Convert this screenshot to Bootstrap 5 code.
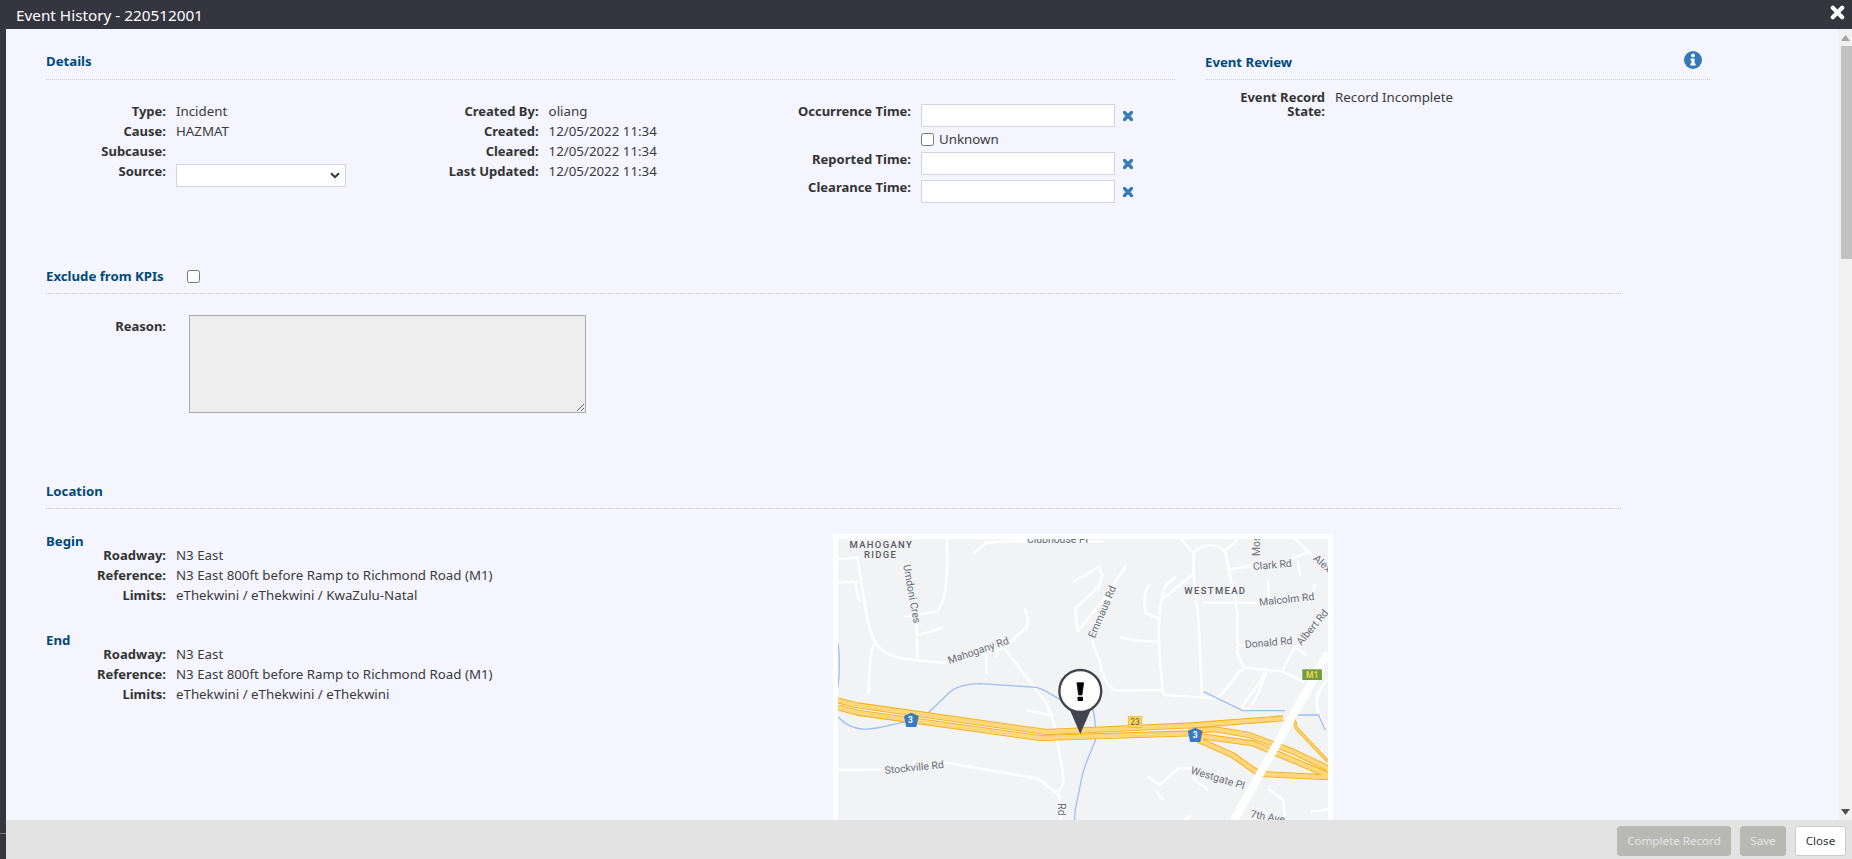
<!DOCTYPE html>
<html lang="en">
<head>
<meta charset="UTF-8">
<title>Event History - 220512001</title>
<link href="https://cdn.jsdelivr.net/npm/bootstrap@5.3.1/dist/css/bootstrap.min.css" rel="stylesheet">
<style>
    html, body { height: 100%; }
    body { margin: 0; overflow: hidden; background: #353540; color: #3a3a3a; font-family: "Noto Sans", "Liberation Sans", sans-serif; font-size: 13.3px; line-height: 20px; }
    .ev-title { height: 29px; background: #353540; color: #fff; font-size: 15.3px; padding-left: 16px; padding-right: 7px; }
    .ev-body { height: 791px; }
    .ev-strip { width: 6px; background: #353540; position: relative; }
    .ev-strip::after { content: ""; position: absolute; left: 0; right: 0; top: 804px; height: 1px; background: #77777f; }
    .ev-main { width: 1833px; background: #f4f5ff; padding: 0 0 0 40px; overflow: hidden; }
    .ev-head { color: #00497b; font-weight: 700; font-size: 13.2px; line-height: 20px; border-bottom: 1px dotted #c8c8d0; }
    .head-details { width: 1129px; padding-top: 22px; padding-bottom: 7px; }
    .head-review { width: 505px; margin-left: 30px; padding-top: 23px; padding-bottom: 7px; }
    .head-wide { width: 1575px; padding-bottom: 7px; }
    .head-kpi { gap: 23px; }
    .ev-cols { width: 1129px; padding-top: 21px; height: 186px; }
    .ev-col1 { width: 340px; }
    .ev-col2 { width: 340px; }
    .ev-grid { display: grid; column-gap: 10px; align-content: start; }
    .grid-a { grid-template-columns: 120px 1fr; }
    .grid-b { grid-template-columns: 152.6px 1fr; }
    .grid-c { grid-template-columns: 185px 1fr; }
    .ev-lbl { font-weight: 700; font-size: 13px; text-align: right; color: #333; }
    .ev-select { width: 170px; height: 23px; margin-top: 3px; padding: 0 24px 0 4px; border: 1px solid #d2d2e0; border-radius: 0; background-image: url("data:image/svg+xml,%3csvg xmlns='http://www.w3.org/2000/svg' viewBox='0 0 10 7'%3e%3cpath fill='none' stroke='%23333' stroke-width='2' d='M1 1.2 5 5.2 9 1.2'/%3e%3c/svg%3e"); background-size: 10px 7px; background-position: right 5px center; font-size: 13px; }
    .ev-input { width: 194px; height: 23px; margin-top: 3px; padding: 0 4px; border: 1px solid #d2d2e0; border-radius: 0; font-size: 13px; }
    .ev-x { width: 12px; height: 12px; margin-left: 7px; margin-top: 9px; }
    .ev-time { height: 28px; }
    .ev-unknown { height: 20px; }
    .ev-unknown input { width: 13px; height: 13px; margin: 0 5px 0 0; }
    .ev-review { width: 505px; margin-left: 30px; padding-top: 10px; }
    .ev-review div { line-height: 14px; }
    .ev-reason { width: 397px; height: 98px; background: #eee; border: 1px solid #aaa; border-radius: 0; display: block; }
    .reason-row { padding-top: 21px; height: 187px; }
    .reason-row .ev-lbl { margin-top: 1px; }
    .grid-r { grid-template-columns: 120px 1fr; column-gap: 23px; }
    .ev-sub { color: #00497b; font-weight: 700; font-size: 13.2px; line-height: 20px; }
    .ev-loc { padding-top: 22px; }
    .loc-left { width: 787px; }
    .ev-block { height: 99px; }
    .ev-block .grid-a { margin-top: -6px; }
    .ev-map { width: 500px; height: 300px; background: #fff; padding: 5px 5px 0; margin-top: 3px; }
    .ev-map svg { display: block; }
    .ev-scroll { width: 13px; background: #f1f1f1; }
    .ev-arrow { height: 17px; }
    .ev-thumb { height: 213px; background: #c1c1c1; margin-left: 2px; }
    .ev-foot { height: 39px; background: #e3e3e3; padding-right: 6px; padding-bottom: 3px; margin-left: 6px; gap: 9px; }
    .ev-btn { height: 30px; padding: 0; font-size: 11.6px; border-radius: 3px; line-height: 28px; }
    .ev-btn-off, .ev-btn-off:disabled { background: #b8b8b5; border: 1px solid #b8b8b5; color: #e6e6e6; opacity: 1; }
    .ev-btn-close { background: #fff; border: 1px solid #ccc; color: #333; }
    .w-complete { width: 114px; }
    .w-save { width: 46px; }
    .w-close { width: 51px; }
    .m-road { fill: none; stroke: #fff; stroke-width: 7; stroke-linecap: round; stroke-linejoin: round; }
    .m-water { fill: none; stroke: #9cc0f5; stroke-width: 4; }
    .m-hw { fill: none; stroke: #f9ab00; stroke-width: 18; stroke-linejoin: round; }
    .m-hw2 { fill: none; stroke: #fdd77f; stroke-width: 13; stroke-linejoin: round; }
    .m-txt { font-family: Roboto, "Liberation Sans", sans-serif; font-size: 31px; fill: #6b6f75; paint-order: stroke; stroke: #f2f3f5; stroke-width: 5px; }
    .m-area { font-family: Roboto, "Liberation Sans", sans-serif; font-size: 28px; font-weight: 500; letter-spacing: 4px; fill: #55585e; }
</style>
</head>
<body>
    <div class="ev-title d-flex align-items-center justify-content-between">
        <span>Event History - 220512001</span>
        <svg width="15" height="15" viewBox="0 0 16 16" class="mb-1"><path d="M3 3 13 13M13 3 3 13" stroke="#fff" stroke-width="4.4" stroke-linecap="round"/></svg>
    </div>

    <div class="ev-body d-flex">
        <div class="ev-strip"></div>
        <div class="ev-main">
            <div class="d-flex">
                <div class="ev-head head-details">Details</div>
                <div class="ev-head head-review d-flex justify-content-between">
                    <span>Event Review</span>
                    <svg width="18" height="18" viewBox="0 0 18 18" class="me-2" style="margin-top:-1px">
                        <circle cx="9" cy="9" r="9" fill="#337ab7"/>
                        <circle cx="9" cy="4.4" r="1.9" fill="#fff"/>
                        <path d="M6.6 7.4H10.6V12.6H11.6V14.6H6.4V12.6H7.4V9.4H6.6Z" fill="#fff"/>
                    </svg>
                </div>
            </div>

            <div class="d-flex">
                <div class="ev-cols d-flex">
                    <div class="ev-col1 ev-grid grid-a">
                        <div class="ev-lbl">Type:</div><div>Incident</div>
                        <div class="ev-lbl">Cause:</div><div>HAZMAT</div>
                        <div class="ev-lbl">Subcause:</div><div></div>
                        <div class="ev-lbl">Source:</div><div><select class="form-select ev-select"><option></option></select></div>
                    </div>
                    <div class="ev-col2 ev-grid grid-b">
                        <div class="ev-lbl">Created By:</div><div>oliang</div>
                        <div class="ev-lbl">Created:</div><div>12/05/2022 11:34</div>
                        <div class="ev-lbl">Cleared:</div><div>12/05/2022 11:34</div>
                        <div class="ev-lbl">Last Updated:</div><div>12/05/2022 11:34</div>
                    </div>
                    <div class="ev-grid grid-c">
                        <div class="ev-lbl">Occurrence Time:</div>
                        <div class="d-flex align-items-start ev-time"><input class="form-control ev-input"><svg class="ev-x" viewBox="0 0 12 12"><path d="M2.5 2.5 9.5 9.5M9.5 2.5 2.5 9.5" stroke="#337ab7" stroke-width="3.2" stroke-linecap="round"/></svg></div>
                        <div></div>
                        <div class="d-flex align-items-center ev-unknown"><input type="checkbox"><span>Unknown</span></div>
                        <div class="ev-lbl">Reported Time:</div>
                        <div class="d-flex align-items-start ev-time"><input class="form-control ev-input"><svg class="ev-x" viewBox="0 0 12 12"><path d="M2.5 2.5 9.5 9.5M9.5 2.5 2.5 9.5" stroke="#337ab7" stroke-width="3.2" stroke-linecap="round"/></svg></div>
                        <div class="ev-lbl">Clearance Time:</div>
                        <div class="d-flex align-items-start ev-time"><input class="form-control ev-input"><svg class="ev-x" viewBox="0 0 12 12"><path d="M2.5 2.5 9.5 9.5M9.5 2.5 2.5 9.5" stroke="#337ab7" stroke-width="3.2" stroke-linecap="round"/></svg></div>
                    </div>
                </div>
                <div class="ev-review ev-grid grid-a">
                    <div class="ev-lbl">Event Record State:</div><div>Record Incomplete</div>
                </div>
            </div>

            <div class="ev-head head-wide head-kpi d-flex align-items-center">Exclude from KPIs <input type="checkbox"></div>

            <div class="reason-row ev-grid grid-r">
                <div class="ev-lbl">Reason:</div>
                <textarea class="ev-reason" disabled></textarea>
            </div>

            <div class="ev-head head-wide">Location</div>

            <div class="d-flex ev-loc">
                <div class="loc-left">
                    <div class="ev-block">
                        <div class="ev-sub">Begin</div>
                        <div class="ev-grid grid-a">
                            <div class="ev-lbl">Roadway:</div><div>N3 East</div>
                            <div class="ev-lbl">Reference:</div><div>N3 East 800ft before Ramp to Richmond Road (M1)</div>
                            <div class="ev-lbl">Limits:</div><div>eThekwini / eThekwini / KwaZulu-Natal</div>
                        </div>
                    </div>
                    <div class="ev-block">
                        <div class="ev-sub">End</div>
                        <div class="ev-grid grid-a">
                            <div class="ev-lbl">Roadway:</div><div>N3 East</div>
                            <div class="ev-lbl">Reference:</div><div>N3 East 800ft before Ramp to Richmond Road (M1)</div>
                            <div class="ev-lbl">Limits:</div><div>eThekwini / eThekwini / eThekwini</div>
                        </div>
                    </div>
                </div>
                <div class="ev-map">
                    <svg width="490" height="281" viewBox="53 57 1450 843" preserveAspectRatio="none">
                        <rect x="53" y="57" width="1450" height="843" fill="#f2f3f5"/>
                        <!-- minor roads -->
                        <path class="m-road" d="M53 118 110 112C130 220 135 320 165 370C190 410 240 420 370 428M110 185 53 188M105 190 115 240M375 57C380 170 370 250 345 275L250 290M285 310 288 415M290 345 362 325M160 370C145 400 145 470 143 520M370 428 545 385 612 320C620 300 610 280 606 268M545 385 670 550C700 610 700 660 715 740C725 790 720 800 700 820M53 750 190 748M355 725 640 775C670 790 690 810 710 830L712 900M615 572 680 585M490 390 493 460M530 385 520 410M455 100 490 70 610 57M490 65 835 65"/>
                        <path class="m-road" d="M905 140 870 190 805 360C810 390 830 410 832 450C840 480 860 510 880 512L1010 510 1020 525 1170 535C1200 520 1230 460 1255 443L1370 455 1430 485M750 185 825 140 835 165 825 200 755 265 762 335 860 210M890 352C930 362 960 365 1005 365M1015 515C1000 400 1000 300 1010 240L1100 165M1010 240 1020 200 1052 170M975 195C955 210 960 270 965 280L1000 295M1070 60 1105 100 1105 165 1120 300 1130 530M1105 100C1130 70 1180 65 1200 100L1235 280 1235 400 1255 443M1135 248 1300 248M1325 185 1328 240M1450 240 1465 195M1215 148 1290 135M1390 120 1445 95 1503 150M1415 125 1420 165M1405 57 1445 95M1235 60 1200 90M1240 375 1260 375M1405 380 1370 447M1405 380 1437 405M1415 375 1503 270M1320 455C1290 510 1250 550 1250 560C1260 580 1280 570 1320 460M1503 480C1460 520 1460 560 1495 620M970 770 1005 795 1060 745 1100 745M995 815 1015 838M1105 770C1105 790 1150 800 1145 810M1330 810 1370 840 1375 890M1455 875 1503 868M1080 900 1095 888"/>
                        <!-- water -->
                        <path class="m-water" d="M53 370C60 420 55 480 53 500M53 590C70 610 90 625 130 628C170 628 220 612 255 605M320 578 385 515C410 495 440 492 470 491L640 502C670 510 690 530 715 540M805 560C815 590 815 620 815 660C800 700 780 740 775 770L755 870 753 900M1135 515 1250 572 1375 572M1410 585 1475 585 1495 630"/>
                        <!-- highway -->
                        <g class="m-hw">
                            <path d="M53 541 110 556 670 636 1100 616 1370 595"/>
                            <path d="M53 562 110 578 650 654 1100 640"/>
                            <path d="M1090 632 1170 628 1270 645 1400 695 1503 745"/>
                            <path d="M1100 645 1280 670 1503 765"/>
                            <path d="M1120 660 1220 705 1300 762 1503 772"/>
                            <path d="M1400 590 1410 625 1503 725" stroke-width="10"/>
                        </g>
                        <g class="m-hw2">
                            <path d="M53 541 110 556 670 636 1100 616 1370 595"/>
                            <path d="M53 562 110 578 650 654 1100 640"/>
                            <path d="M1090 632 1170 628 1270 645 1400 695 1503 745"/>
                            <path d="M1100 645 1280 670 1503 765"/>
                            <path d="M1120 660 1220 705 1300 762 1503 772"/>
                            <path d="M1400 590 1410 625 1503 725" stroke-width="5"/>
                        </g>
                        <path d="M1503 400 1225 900" stroke="#fff" stroke-width="24" fill="none"/>
                        <!-- shields -->
                        <path d="M270 578 292 588 285 621H255L248 588Z" fill="#3b78c5"/>
                        <text x="267" y="609" text-anchor="middle" font-family="Roboto, sans-serif" font-size="25" font-weight="700" fill="#fff">3</text>
                        <path d="M1110 623 1132 633 1125 666H1095L1088 633Z" fill="#3b78c5"/>
                        <text x="1110" y="654" text-anchor="middle" font-family="Roboto, sans-serif" font-size="25" font-weight="700" fill="#fff">3</text>
                        <rect x="912" y="589" width="40" height="33" fill="#fcd567" stroke="#f0b429" stroke-width="2"/>
                        <text x="932" y="614" text-anchor="middle" font-family="Roboto, sans-serif" font-size="25" fill="#5f5a40">23</text>
                        <rect x="1427" y="448" width="58" height="32" fill="#6d9f3d"/>
                        <text x="1456" y="473" text-anchor="middle" font-family="Roboto, sans-serif" font-size="25" font-weight="700" fill="#f5cf55">M1</text>
                        <!-- labels -->
                        <text class="m-area" x="87" y="85">MAHOGANY</text>
                        <text class="m-area" x="130" y="115">RIDGE</text>
                        <text class="m-area" x="1078" y="223">WESTMEAD</text>
                        <text class="m-txt" x="612" y="69">Clubhouse Pl</text>
                        <text class="m-txt" transform="translate(246 136) rotate(80)">Umdoni Cres</text>
                        <text class="m-txt" transform="translate(382 432) rotate(-19)">Mahogany Rd</text>
                        <text class="m-txt" transform="translate(812 356) rotate(-67)">Emmaus Rd</text>
                        <text class="m-txt" transform="translate(1303 108) rotate(-90)">Mos</text>
                        <text class="m-txt" transform="translate(1282 150) rotate(-5)">Clark Rd</text>
                        <text class="m-txt" transform="translate(1458 118) rotate(42)">Alex</text>
                        <text class="m-txt" transform="translate(1300 257) rotate(-6)">Malcolm Rd</text>
                        <text class="m-txt" transform="translate(1424 377) rotate(-50)">Albert Rd</text>
                        <text class="m-txt" transform="translate(1258 384) rotate(-5)">Donald Rd</text>
                        <text class="m-txt" transform="translate(192 762) rotate(-6)">Stockville Rd</text>
                        <text class="m-txt" transform="translate(1095 760) rotate(17)">Westgate Pl</text>
                        <text class="m-txt" transform="translate(703 850) rotate(90)">Rd</text>
                        <text class="m-txt" transform="translate(1272 892) rotate(10)">7th Ave</text>
                        <!-- pin -->
                        <path d="M735 560 770 642 805 560Z" fill="#43434f"/>
                        <ellipse cx="770" cy="513" rx="62" ry="63" fill="#fff" stroke="#43434f" stroke-width="7"/>
                        <path d="M760 488H780L775 525H765Z" fill="#000" stroke="#000" stroke-width="2" stroke-linejoin="round"/>
                        <rect x="762" y="530" width="16" height="13" rx="2" fill="#000"/>
                    </svg>
                </div>
            </div>
        </div>

        <div class="ev-scroll d-flex flex-column">
            <div class="ev-arrow d-flex align-items-center justify-content-center"><svg width="9" height="6" viewBox="0 0 9 6"><path d="M4.5 0 9 6H0Z" fill="#a3a3a3"/></svg></div>
            <div class="ev-thumb"></div>
            <div class="flex-grow-1"></div>
            <div class="ev-arrow d-flex align-items-center justify-content-center"><svg width="9" height="6" viewBox="0 0 9 6"><path d="M0 0H9L4.5 6Z" fill="#505050"/></svg></div>
        </div>
    </div>

    <div class="ev-foot d-flex align-items-end justify-content-end">
        <button class="btn ev-btn ev-btn-off w-complete" disabled>Complete Record</button>
        <button class="btn ev-btn ev-btn-off w-save" disabled>Save</button>
        <button class="btn ev-btn ev-btn-close w-close">Close</button>
    </div>

    <script src="https://cdn.jsdelivr.net/npm/bootstrap@5.3.1/dist/js/bootstrap.bundle.min.js"></script>
</body>
</html>
